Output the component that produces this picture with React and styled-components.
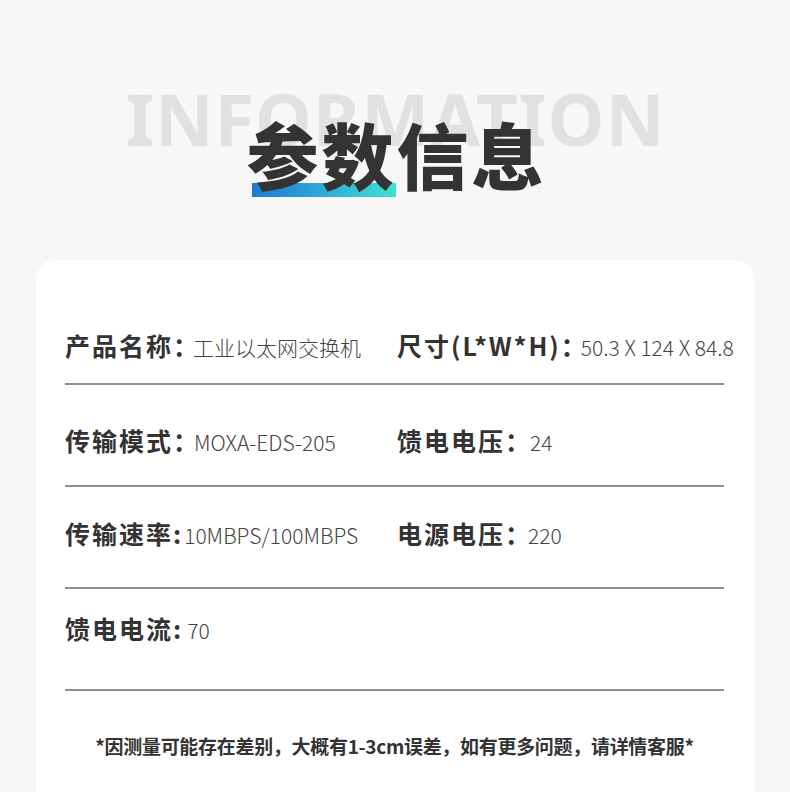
import React from "react";
import styled, { createGlobalStyle } from "styled-components";

const Global = createGlobalStyle`
  html, body { margin: 0; padding: 0; background: #f7f7f7; }
  body { font-family: "Noto Sans CJK SC", "Noto Sans", sans-serif; }
  * { box-sizing: border-box; }
`;

const Page = styled.div`
  width: 790px;
  min-height: 792px;
  background: #f7f7f7;
  overflow: hidden;
`;

const Header = styled.header`
  display: flex;
  flex-direction: column;
  align-items: center;
  padding: 82px 0 71px;
`;

const Ghost = styled.div`
  font-family: "Noto Sans", sans-serif;
  font-weight: 700;
  font-size: 72px;
  line-height: 72px;
  letter-spacing: 1px;
  padding-left: 1px;
  color: #e1e1e1;
`;

const Title = styled.h1`
  position: relative;
  isolation: isolate;
  margin: -37px 0 0;
  font-family: "Noto Sans CJK SC", sans-serif;
  font-weight: 900;
  font-size: 72px;
  line-height: 72px;
  letter-spacing: 3px;
  padding-left: 3px;
  color: #333333;

  &::before {
    content: "";
    position: absolute;
    z-index: -1;
    left: 9px;
    top: 66px;
    width: 144px;
    height: 14px;
    background: linear-gradient(90deg, #1f78d6 0%, #2fb0d8 55%, #40e2cf 100%);
  }
`;

const Card = styled.section`
  margin: 0 36px;
  min-height: 560px;
  background: #ffffff;
  border-radius: 20px;
  padding: 23px 30px 40px 29px;
`;

const Row = styled.div`
  display: grid;
  grid-template-columns: 332px 1fr;
  height: 102px;
  padding-top: ${(p) => p.$top}px;
  border-bottom: 2px solid #8c9099;
`;

const Item = styled.div`
  display: flex;
  align-items: baseline;
  white-space: nowrap;
  line-height: 30px;
`;

const Label = styled.span`
  font-family: "Noto Sans CJK SC", sans-serif;
  font-weight: 700;
  font-size: 25px;
  letter-spacing: 2px;
  color: #333333;
`;

const Value = styled.span`
  font-family: "Noto Sans CJK SC", sans-serif;
  font-weight: 300;
  font-size: 21px;
  color: #444444;
  margin-left: ${(p) => p.$gap || 0}px;
`;

const Note = styled.p`
  margin: 43px 0 0;
  text-align: center;
  font-family: "Noto Sans CJK SC", sans-serif;
  font-weight: 700;
  font-size: 19px;
  line-height: 24px;
  letter-spacing: -0.3px;
  color: #333333;
`;

const rows = [
  {
    top: 47,
    items: [
      { label: "产品名称：", value: "工业以太网交换机", gap: -7 },
      { label: "尺寸(L*W*H)：", value: "50.3 X 124 X 84.8", gap: -7 },
    ],
  },
  {
    top: 40,
    items: [
      { label: "传输模式：", value: "MOXA-EDS-205", gap: -6 },
      { label: "馈电电压：", value: "24", gap: -2 },
    ],
  },
  {
    top: 31,
    items: [
      { label: "传输速率:", value: "10MBPS/100MBPS", gap: 1 },
      { label: "电源电压：", value: "220", gap: -4 },
    ],
  },
  {
    top: 24,
    items: [{ label: "馈电电流:", value: "70", gap: 4 }],
  },
];

export default function App() {
  return (
    <Page>
      <Global />
      <Header>
        <Ghost>INFORMATION</Ghost>
        <Title>参数信息</Title>
      </Header>
      <Card>
        {rows.map((r, i) => (
          <Row key={i} $top={r.top}>
            {r.items.map((it, j) => (
              <Item key={j}>
                <Label>{it.label}</Label>
                <Value $gap={it.gap}>{it.value}</Value>
              </Item>
            ))}
          </Row>
        ))}
        <Note>*因测量可能存在差别，大概有1-3cm误差，如有更多问题，请详情客服*</Note>
      </Card>
    </Page>
  );
}
